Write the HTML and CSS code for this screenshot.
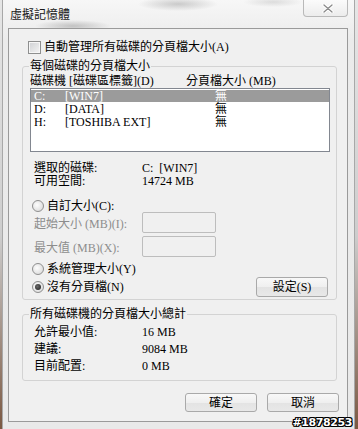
FILE: index.html
```html
<!DOCTYPE html>
<html lang="zh-Hant">
<head>
    <meta charset="UTF-8">
    <title>虛擬記憶體</title>
    <link rel="stylesheet" href="styles.css">
</head>
<body>
    <div class="window">
        <div class="titlebar">
            <span class="title">虛擬記憶體</span>
            <span class="close-btn">
                <svg width="12" height="9" viewBox="0 0 12 9">
                    <path d="M2 1 L10 8 M10 1 L2 8" stroke="#ffffff" stroke-width="3.2" stroke-linecap="round"/>
                    <path d="M2 1 L10 8 M10 1 L2 8" stroke="#8a8a8a" stroke-width="1.3" stroke-linecap="round"/>
                </svg>
            </span>
        </div>

        <div class="client">
            <!-- Auto manage -->
            <div class="auto-row"><span class="checkbox"></span>自動管理所有磁碟的分頁檔大小(A)</div>

            <!-- Per-drive group -->
            <fieldset class="group">
                <legend>每個磁碟的分頁檔大小</legend>
                <div class="list-head">
                    <span class="col-drive">磁碟機 [磁碟區標籤](D)</span>
                    <span>分頁檔大小 (MB)</span>
                </div>
                <div class="listbox">
                    <div class="list-row selected"><span class="c-letter">C:</span><span class="c-label">[WIN7]</span><span>無</span></div>
                    <div class="list-row"><span class="c-letter">D:</span><span class="c-label">[DATA]</span><span>無</span></div>
                    <div class="list-row"><span class="c-letter">H:</span><span class="c-label">[TOSHIBA EXT]</span><span>無</span></div>
                </div>

                <div class="info-row first"><span class="info-label">選取的磁碟:</span><span>C:&nbsp; [WIN7]</span></div>
                <div class="info-row"><span class="info-label">可用空間:</span><span>14724 MB</span></div>

                <div class="radio-row custom"><span class="radio"></span>自訂大小(C):</div>
                <div class="field-row"><span class="field-label">起始大小 (MB)(I):</span><span class="textbox"></span></div>
                <div class="field-row second"><span class="field-label">最大值 (MB)(X):</span><span class="textbox"></span></div>
                <div class="radio-row system"><span class="radio"></span>系統管理大小(Y)</div>
                <div class="radio-row none-row">
                    <span class="radio checked"></span>沒有分頁檔(N)
                    <span class="button set-btn">設定(S)</span>
                </div>
            </fieldset>

            <!-- Totals group -->
            <fieldset class="group totals">
                <legend>所有磁碟機的分頁檔大小總計</legend>
                <div class="total-row first"><span class="info-label">允許最小值:</span><span>16 MB</span></div>
                <div class="total-row"><span class="info-label">建議:</span><span>9084 MB</span></div>
                <div class="total-row"><span class="info-label">目前配置:</span><span>0 MB</span></div>
            </fieldset>

            <div class="dialog-buttons">
                <span class="button">確定</span>
                <span class="button">取消</span>
            </div>
        </div>
    </div>
    <div class="watermark">#1878253</div>
</body>
</html>
```

FILE: styles.css
```css
body {
    margin: 0;
    width: 358px;
    height: 429px;
    overflow: hidden;
    position: relative;
    background: linear-gradient(to bottom, #e6e6e6 0%, #cdcdcd 55%, #7a5842 100%);
    font-family: "Liberation Serif", "Noto Sans CJK TC", serif;
    font-size: 12px;
    color: #000;
}
.window {
    margin-left: 2px;
    width: 351px;
    height: 429px;
    border-left: 1px solid #a8a8a8;
    border-right: 1px solid #a8a8a8;
    background:
        radial-gradient(ellipse 38px 6px at 70px 26px, rgba(110, 110, 110, 0.35), transparent),
        radial-gradient(ellipse 40px 7px at 175px 4px, rgba(120, 120, 120, 0.35), transparent),
        radial-gradient(ellipse 30px 5px at 270px 2px, rgba(140, 140, 140, 0.25), transparent),
        linear-gradient(to bottom, #f7f7f7, #ebebeb 40px, #e9e9e9);
}
.titlebar {
    display: flex;
    justify-content: space-between;
    align-items: flex-start;
    height: 28px;
}
.title {
    margin: 7px 0 0 7px;
    font-family: "Noto Sans CJK TC", sans-serif;
    font-size: 12px;
    line-height: 14px;
    color: #1a1a1a;
}
.close-btn {
    width: 45px;
    height: 17px;
    margin-right: 6px;
    box-sizing: border-box;
    border: 1px solid #b9b9b9;
    border-top: none;
    border-radius: 0 0 4px 4px;
    background: linear-gradient(to bottom, #fbfbfb, #ececec);
    display: flex;
    justify-content: center;
    align-items: center;
    padding-left: 4px;
}
.client {
    margin-left: 5px;
    width: 340px;
    height: 394px;
    box-sizing: border-box;
    border: 1px solid #9a9a9a;
    background: #f0f0f0;
}
.auto-row {
    display: flex;
    align-items: center;
    gap: 3px;
    margin: 12px 0 0 19px;
    height: 13px;
    line-height: 13px;
}
.checkbox {
    width: 13px;
    height: 13px;
    box-sizing: border-box;
    border: 1px solid #8e8f8f;
    box-shadow: inset 0 0 0 1px #f6f6f6;
    background: linear-gradient(135deg, #cfd1d4, #f4f4f4);
}
.group {
    margin: 5px 10px 0 13px;
    padding: 0 0 2px 0;
    min-width: 0;
    border: 1px solid #d3d3d3;
    border-radius: 3px;
}
.group legend {
    margin-left: 6px;
    padding: 0 1px;
    line-height: 14px;
}
.list-head {
    display: flex;
    margin-top: 2px;
    padding-left: 7px;
    line-height: 12px;
}
.col-drive {
    width: 156px;
}
.listbox {
    margin: 1px 0 0 7px;
    width: 300px;
    height: 64px;
    box-sizing: border-box;
    border: 1px solid #828790;
    background: #fff;
    padding: 1px 0;
}
.list-row {
    display: flex;
    align-items: center;
    height: 13px;
    line-height: 13px;
    padding-left: 3px;
}
.list-row.selected {
    height: 12px;
    margin-bottom: 1px;
    background: #9b9b9b;
    color: #fff;
}
.c-letter {
    width: 31px;
}
.c-label {
    width: 150px;
}
.info-row {
    display: flex;
    padding-left: 11px;
    height: 13px;
    line-height: 13px;
}
.info-row.first {
    margin-top: 10px;
}
.info-label, .field-label {
    width: 108px;
    flex-shrink: 0;
}
.radio-row {
    display: flex;
    align-items: center;
    gap: 3px;
    padding-left: 9px;
    height: 12px;
    line-height: 12px;
}
.radio-row.custom {
    margin-top: 12px;
}
.radio-row.system {
    margin-top: 6px;
}
.radio-row.none-row {
    height: 20px;
    margin-top: 2px;
}
.radio {
    width: 12px;
    height: 12px;
    box-sizing: border-box;
    border-radius: 50%;
    border: 1px solid #8f8f8f;
    background: radial-gradient(circle at 40% 40%, #fdfdfd, #d4d4d4);
    display: flex;
    justify-content: center;
    align-items: center;
}
.radio.checked::after {
    content: "";
    width: 6px;
    height: 6px;
    border-radius: 50%;
    background: radial-gradient(circle at 40% 40%, #6a6a6a, #1c1c1c);
}
.field-row {
    display: flex;
    align-items: center;
    height: 21px;
    padding-left: 11px;
    color: #8d8d8d;
}
.field-row.second {
    margin-top: 3px;
}
.textbox {
    width: 74px;
    height: 21px;
    box-sizing: border-box;
    border: 1px solid #bdbdbd;
    border-radius: 2px;
    background: #f0f0f0;
}
.button {
    width: 72px;
    height: 20px;
    box-sizing: border-box;
    border: 1px solid #a9a9a9;
    border-radius: 3px;
    background: linear-gradient(to bottom, #f8f8f8 0%, #efefef 50%, #e3e3e3 51%, #e8e8e8 100%);
    display: flex;
    justify-content: center;
    align-items: center;
    font-size: 12px;
    line-height: 12px;
}
.set-btn {
    margin-left: auto;
    margin-right: 8px;
}
.group.totals {
    margin-top: 7px;
    padding-bottom: 5px;
}
.total-row {
    display: flex;
    padding-left: 11px;
    height: 17px;
    line-height: 17px;
}
.total-row.first {
    margin-top: 3px;
}
.dialog-buttons {
    display: flex;
    justify-content: flex-end;
    gap: 10px;
    margin: 12px 8px 0 0;
}
.dialog-buttons .button {
    height: 19px;
}
.watermark {
    position: absolute;
    right: 6px;
    bottom: 0;
    font-family: "DejaVu Sans", sans-serif;
    font-weight: bold;
    font-size: 11px;
    line-height: 12px;
    letter-spacing: -0.4px;
    color: #fff;
    text-shadow: 1px 0 0 #000, -1px 0 0 #000, 0 1px 0 #000, 0 -1px 0 #000,
        1px 1px 0 #000, -1px -1px 0 #000, 1px -1px 0 #000, -1px 1px 0 #000;
}
```
